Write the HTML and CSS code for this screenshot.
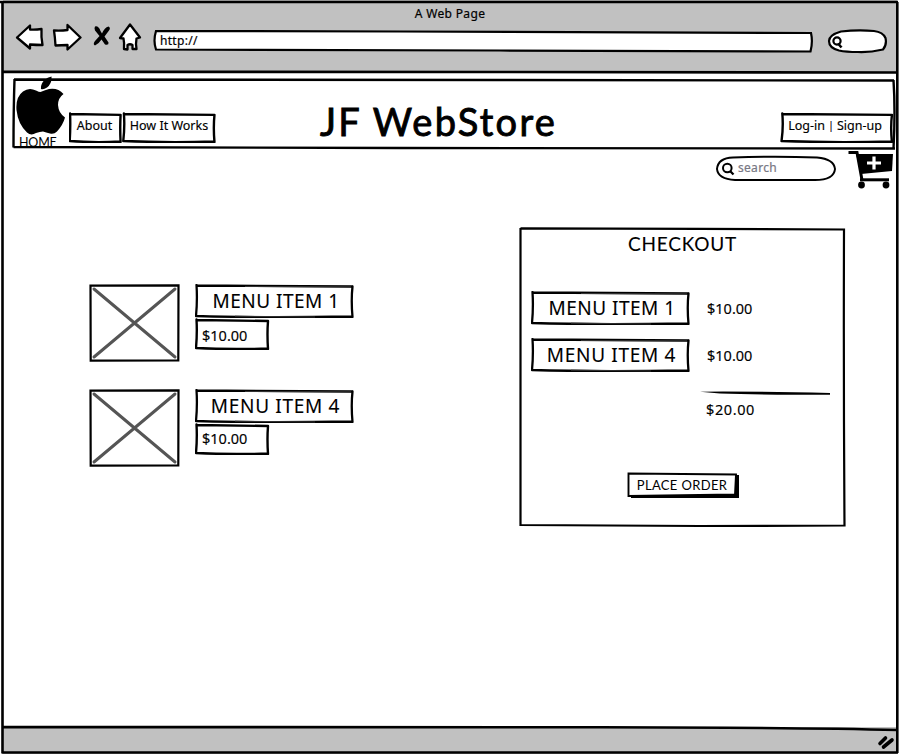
FILE: index.html
```
<!DOCTYPE html>
<html lang="en">
<head>
<meta charset="utf-8">
<title>JF WebStore</title>
<link rel="stylesheet" href="styles.css">
</head>
<body>
<svg class="defs" width="0" height="0" aria-hidden="true">
  <symbol id="label-box" viewBox="0 0 160 34" preserveAspectRatio="none">
    <path d="M2 1.500L157 2.500M1.500 1Q2.500 16 1 32M1 32Q60 34 157.500 32.500M157.500 2.500Q156 16 157.500 33" fill="none" stroke="#000" stroke-width="2.300" stroke-linecap="round"/>
    <path d="M50 2.500L156 2.800M40 32.200L120 33" fill="none" stroke="#333" stroke-width="1"/>
  </symbol>
  <symbol id="price-box" viewBox="0 0 75 32" preserveAspectRatio="none">
    <path vector-effect="non-scaling-stroke" d="M1.500 2L73 3M1.500 1.500Q2.300 15 1 30M1 30Q35 31.800 73 30.500M73 3Q72 16 73 31" fill="none" stroke="#000" stroke-width="2.400" stroke-linecap="round"/>
  </symbol>
  <symbol id="picture" viewBox="0 0 91 78">
    <path d="M1.500 1.700L89.500 1.300L89.300 76.500L1.700 76.700Z" fill="#fff" stroke="#000" stroke-width="2.200"/>
    <path d="M5 5L86 73M86 5L5 73" fill="none" stroke="#555" stroke-width="3" stroke-linecap="round"/>
  </symbol>
</svg>
<div class="window">
  <header class="chrome">
    <div class="window-title">A Web Page</div>
    <div class="toolbar">
      <svg class="back" viewBox="15 22 30 30"><path d="M17 37.500L30 25.500L30 29.500Q35 30 41.500 29Q41 37 42.500 45Q36 45 30 44.500L30 48.500Z"/></svg>
      <svg class="forward" viewBox="52 22 30 30"><path d="M54 30.500Q61 31 67.500 30L67.500 25L80.500 37.500L67.500 49.500L67.500 45Q61 45 55.500 45.500Q55 37 54 30.500Z"/></svg>
      <svg class="stop" viewBox="90 22 22 30"><path d="M95 26.500Q98.500 25.500 100.500 31L102 33.500Q104.500 27.500 108.500 26.500Q111 28 109 30.500L104.500 36.500L108.500 42.500Q109 45.500 105 44.500L101.500 39.500Q99 43.500 95 45.500Q92.500 44.500 95 41L99.500 36L95 30.500Q94 28 95 26.500Z"/></svg>
      <svg class="house" viewBox="117 21 26 32"><path d="M130 24.500L140 37.500L136.500 38.500Q135.500 44 136.500 49L132.500 49L132.500 45Q130 43.500 127.500 45L127.500 49.500L124 49Q124.500 43 123.500 38.500L120 38Z"/></svg>
      <div class="url">
        <svg class="sketch" viewBox="153 29 661 24"><path d="M156 31L400 31.500L811 33Q813 42 810.500 51.500L500 50.500L156 49.500Q153 41 156 31Z" fill="#fff" stroke="#000" stroke-width="2.200"/></svg>
        <span>http://</span>
      </div>
      <svg class="mini-search" viewBox="827 28 61 26"><path d="M841 31.500Q858 29.500 874 31Q883 32 885.500 38Q887 45 883 49.500Q870 52.500 858 52Q846 52 839 50.500Q829 48 829 41Q829 35 841 31.500Z" fill="#fff" stroke="#000" stroke-width="2.200"/><circle cx="837" cy="41" r="3.600" fill="none" stroke="#000" stroke-width="2.200"/><path d="M838 43.500L841.500 47.500" stroke="#000" stroke-width="2.600"/></svg>
    </div>
  </header>
  <main class="page">
    <nav class="site-bar">
      <svg class="sketch" viewBox="12 78 884 72"><path d="M14 79.500L500 80L894 80.500M14.500 79Q13.500 110 13.500 147.500M13.500 147L400 148L895 148.500M893.500 80Q895.500 110 893.500 149" fill="none" stroke="#000" stroke-width="2.400"/></svg>
      <a class="home">
        <svg viewBox="15 75 52 60"><path d="M51.500 76.500Q52 84 47 87.500Q43.500 90 41 89Q40.500 84 44.500 80Q47.500 77 51.500 76.500ZM40.500 92Q44 90.500 49 89Q58 87.500 63.500 94Q58 98 58 105Q58.500 113 65 117.500Q63 125 57 131.500Q54 134.500 50 133.500Q46 132.500 43 131.500Q40 131.500 36 133Q31 136 27 132.500Q18 124 16.500 110Q15.500 97 23 91.500Q29 87 36 90.500Q39 92 40.500 92Z"/></svg>
        <span>HOME</span>
      </a>
      <a class="tab about"><svg class="sketch"><use href="#price-box"/></svg><span>About</span></a>
      <a class="tab how"><svg class="sketch"><use href="#price-box"/></svg><span>How It Works</span></a>
      <h1>JF WebStore</h1>
      <a class="tab login"><svg class="sketch"><use href="#price-box"/></svg><span>Log-in <i>|</i> Sign-up</span></a>
    </nav>
    <div class="tools">
      <div class="search">
        <svg class="sketch" viewBox="715 155 122 27"><path d="M733 157.500Q775 156 817 157.500Q834 159 835 169Q834 180 815 180L735 180Q718 179 717 169Q718 158 733 157.500Z" fill="#fff" stroke="#000" stroke-width="2"/><circle cx="727.300" cy="168" r="4.300" fill="none" stroke="#000" stroke-width="2"/><path d="M730 171L733.500 174.500" stroke="#000" stroke-width="2.300"/></svg>
        <span>search</span>
      </div>
      <svg class="cart" viewBox="847 150 47 40"><path d="M848.500 152.500L857 152.500L862 180" fill="none" stroke="#000" stroke-width="3"/><path d="M856 154L893 154L892 171L861 174Z"/><path d="M860 179.800L889 179.800" stroke="#000" stroke-width="3"/><circle cx="861.500" cy="185" r="3.400"/><circle cx="886" cy="185" r="3.400"/><path d="M874 156.500V169.500M867 163H881" stroke="#fff" stroke-width="3.200"/></svg>
    </div>
    <div class="content">
      <section class="products">
        <article class="product">
          <svg class="picture"><use href="#picture"/></svg>
          <div class="info">
            <div class="label"><svg class="sketch"><use href="#label-box"/></svg><span>MENU ITEM 1</span></div>
            <div class="price-tag"><svg class="sketch"><use href="#price-box"/></svg><span>$10.00</span></div>
          </div>
        </article>
        <article class="product second">
          <svg class="picture"><use href="#picture"/></svg>
          <div class="info">
            <div class="label wide"><svg class="sketch"><use href="#label-box"/></svg><span>MENU ITEM 4</span></div>
            <div class="price-tag"><svg class="sketch"><use href="#price-box"/></svg><span>$10.00</span></div>
          </div>
        </article>
      </section>
      <section class="checkout">
        <svg class="sketch" viewBox="519 227 327 300"><path d="M520.500 228.300L700 228.800L844 229.500Q843.500 380 844.500 525.500L700 526L520.500 525Q520 380 520.500 228Z" fill="none" stroke="#000" stroke-width="2.200"/></svg>
        <h2>CHECKOUT</h2>
        <div class="line"><div class="label"><svg class="sketch"><use href="#label-box"/></svg><span>MENU ITEM 1</span></div><span class="price">$10.00</span></div>
        <div class="line"><div class="label wide"><svg class="sketch"><use href="#label-box"/></svg><span>MENU ITEM 4</span></div><span class="price">$10.00</span></div>
        <div class="total">
          <svg viewBox="700 391 131 5"><path d="M700 391.700Q750 391.200 830 393L830 394.800Q760 394.800 720 393.600Z"/></svg>
          <span class="price">$20.00</span>
        </div>
        <button class="order"><svg class="sketch" viewBox="626 472 114 27"><path d="M631 475H739V498H631Z"/><path d="M628.500 473.500L736 474.500L735 494.500L628.500 496Z" fill="#fff" stroke="#000" stroke-width="1.900"/></svg><span>PLACE ORDER</span></button>
      </section>
    </div>
  </main>
  <footer class="status"><svg viewBox="876 734 20 18"><path d="M880 743.500L885.500 738M883.500 747L892 740" fill="none" stroke="#000" stroke-width="3.600" stroke-linecap="round"/></svg></footer>
  <svg class="frame" viewBox="0 0 900 755"><path d="M0 2H898M2.500 2Q2 250 2.500 753M897.300 2V753M1.500 752.500L898 752.500M2 71.800L500 72L898 72.500M2 727L600 727.300Q800 727.500 898 730" fill="none" stroke="#000" stroke-width="2.600"/></svg>
</div>
</body>
</html>
```
FILE: styles.css
```
* { box-sizing: border-box; }
body { margin: 0; background: #fff; color: #000; font-family: "Noto Sans", sans-serif; font-size: 13px; }
h1, h2 { margin: 0; font-weight: 400; font-family: Lato, sans-serif; }
svg { display: block; flex: none; }
.defs { position: absolute; }
.window { position: relative; display: flex; flex-direction: column; width: 900px; height: 755px; overflow: hidden; }
.frame { position: absolute; inset: 0; width: 900px; height: 755px; pointer-events: none; }
.sketch { position: absolute; inset: 0; width: 100%; height: 100%; overflow: visible; }
.sketch + span, .sketch + h2 { position: relative; }

.chrome { height: 72px; margin: 0 3px; background: #c1c1c1; }
.window-title { height: 21px; padding-top: 5px; text-align: center; font-size: 12px; line-height: 18px; letter-spacing: .35px; -webkit-text-stroke: .2px #000; }
.toolbar { display: flex; height: 32px; padding-left: 12px; }
.back, .forward, .house { fill: #fff; stroke: #000; stroke-width: 2.3; stroke-linejoin: round; }
.back, .forward { width: 30px; height: 30px; margin-top: 1px; }
.forward { margin-left: 7px; }
.stop { width: 22px; height: 30px; margin: 1px 0 0 8px; }
.house { width: 26px; height: 32px; margin-left: 5px; }
.url { position: relative; width: 661px; height: 24px; margin: 8px 0 0 10px; padding-left: 7px; line-height: 23px; font-size: 12px; letter-spacing: .3px; -webkit-text-stroke: .2px #000; }
.mini-search { width: 61px; height: 26px; margin: 7px 0 0 13px; }

.page { flex: 1; }
.site-bar { position: relative; display: flex; width: 884px; height: 72px; margin: 6px 0 0 12px; }
.home { position: relative; width: 52px; margin: -3px 0 0 3px; }
.home svg { width: 52px; height: 60px; }
.home span { display: block; height: 14px; margin-left: 4px; font: 12.5px/15px Lato, sans-serif; letter-spacing: -.2px; }
.tab { position: relative; height: 31px; margin-top: 34px; line-height: 27px; font-size: 12.5px; white-space: nowrap; text-align: center; -webkit-text-stroke: .15px #000; }
.tab i { font-style: normal; font-size: 10px; vertical-align: 1px; }
.about { width: 53px; margin-left: 2px; padding-right: 2px; }
.how { width: 95px; padding-right: 1px; }
.login { width: 113px; margin-left: auto; margin-right: 2px; padding-right: 5px; }
.login .sketch { left: -1px; width: 115px; }
h1 { width: 244px; margin: 20px 0 0 103px; font-size: 38px; line-height: 47px; letter-spacing: 2.3px; white-space: nowrap; -webkit-text-stroke: .9px #000; }

.tools { display: flex; justify-content: flex-end; height: 40px; margin-right: 6px; }
.search { position: relative; width: 122px; height: 27px; margin: 5px 10px 0 0; padding-left: 23px; line-height: 25px; color: #777783; font-size: 12px; letter-spacing: .3px; -webkit-text-stroke: .2px #777783; }
.cart { width: 47px; height: 40px; }

.content { display: flex; align-items: flex-start; padding-left: 89px; }
.products { width: 430px; padding-top: 94px; }
.product { display: flex; gap: 15px; height: 78px; }
.second { margin-top: 27px; }
.picture { width: 91px; height: 78px; }
.label { position: relative; width: 160px; height: 34px; padding-left: 2px; text-align: center; font-size: 19px; line-height: 35px; letter-spacing: .5px; white-space: nowrap; -webkit-text-stroke: .1px #000; }
.label.wide { padding-left: 1px; letter-spacing: .7px; }
.price-tag { position: relative; width: 75px; height: 32px; padding-left: 7px; font-size: 14.5px; line-height: 34px; -webkit-text-stroke: .15px #000; }
.second .price-tag { line-height: 31px; }

.checkout { position: relative; width: 327px; height: 300px; margin-top: 37px; padding: 0 12px; }
.checkout h2 { height: 64px; text-align: center; font-size: 19px; line-height: 34px; letter-spacing: .8px; -webkit-text-stroke: .1px #000; }
.line { display: flex; align-items: center; gap: 16px; margin-bottom: 13px; }
.price { font-size: 14.5px; -webkit-text-stroke: .15px #000; }
.total { width: 131px; height: 81px; margin: 19px 0 0 169px; }
.total svg { width: 131px; height: 5px; margin-bottom: 3px; }
.total .price { margin-left: 6px; letter-spacing: .6px; }
.order { position: relative; display: block; width: 114px; height: 27px; margin: 0 0 0 95px; padding: 0 2px 2px 0; border: 0; background: none; color: #000; font: 13px/24px Lato, sans-serif; letter-spacing: .35px; white-space: nowrap; }

.status { display: flex; justify-content: flex-end; height: 27px; margin: 0 3px 1px; padding: 7px 1px 0; background: #c1c1c1; }
.status svg { width: 20px; height: 18px; }
```
